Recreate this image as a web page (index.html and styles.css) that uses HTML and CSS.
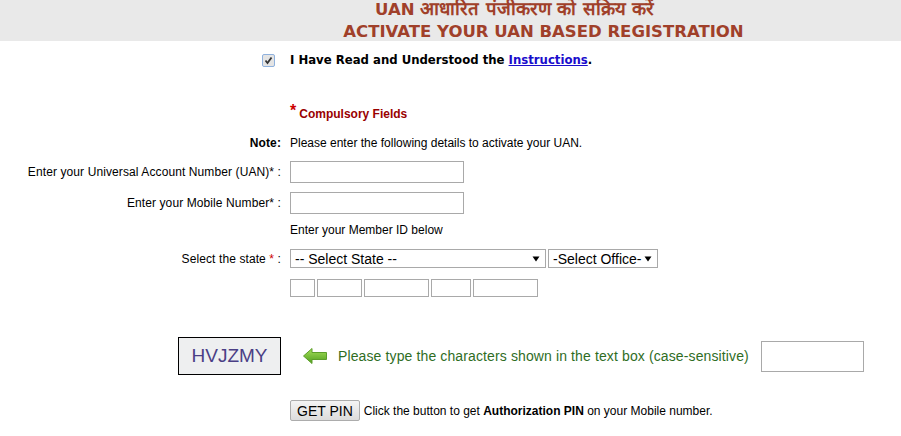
FILE: index.html
```html
<!DOCTYPE html>
<html>
<head>
    <meta charset="UTF-8">
    <title>Activate UAN</title>
    <link rel="stylesheet" href="styles.css">
</head>
<body>
    <div class="header">
        <div class="title-hi">UAN <span class="deva">आधारित पंजीकरण को सक्रिय करें</span></div>
        <div class="title-en">ACTIVATE YOUR UAN BASED REGISTRATION</div>
    </div>

    <div class="form">
        <div class="row row-agree">
            <div class="label"><input type="checkbox" class="agree" checked></div>
            <div class="field agree-text">I Have Read and Understood the&nbsp;<a href="#">Instructions</a>.</div>
        </div>

        <div class="row row-compulsory">
            <div class="label"></div>
            <div class="field compulsory"><span class="star">*</span> Compulsory Fields</div>
        </div>

        <div class="row row-note">
            <div class="label"><b>Note:</b></div>
            <div class="field">Please enter the following details to activate your UAN.</div>
        </div>

        <div class="row row-input">
            <div class="label">Enter your Universal Account Number (UAN)* :</div>
            <div class="field"><input type="text" class="text-box"></div>
        </div>

        <div class="row row-input">
            <div class="label">Enter your Mobile Number* :</div>
            <div class="field"><input type="text" class="text-box"></div>
        </div>

        <div class="row row-member">
            <div class="label"></div>
            <div class="field">Enter your Member ID below</div>
        </div>

        <div class="row row-select">
            <div class="label">Select the state <span class="req">*</span> :</div>
            <div class="field selects">
                <select class="state"><option>-- Select State --</option></select>
                <select class="office"><option>-Select Office-</option></select>
            </div>
        </div>

        <div class="row row-member-id">
            <div class="label"></div>
            <div class="field member-ids">
                <input type="text" class="mid mid-1">
                <input type="text" class="mid mid-2">
                <input type="text" class="mid mid-3">
                <input type="text" class="mid mid-4">
                <input type="text" class="mid mid-3">
            </div>
        </div>

        <div class="row row-captcha">
            <div class="label"><div class="captcha">HVJZMY</div></div>
            <div class="field captcha-field">
                <svg class="arrow" width="24" height="16" viewBox="0 0 24 16">
                    <defs>
                        <linearGradient id="g" x1="0" y1="0" x2="0" y2="1">
                            <stop offset="0" stop-color="#a6e05a"/>
                            <stop offset="1" stop-color="#4f9e1d"/>
                        </linearGradient>
                    </defs>
                    <path d="M0.5 8 L9 0.5 V4.5 H23.5 V11.5 H9 V15.5 Z" fill="url(#g)" stroke="#5c9e2a" stroke-width="1"/>
                </svg>
                <span class="captcha-text">Please type the characters shown in the text box (case-sensitive)</span>
                <input type="text" class="captcha-box">
            </div>
        </div>

        <div class="row row-pin">
            <div class="label"></div>
            <div class="field">
                <button class="pin-btn">GET PIN</button>
                <span class="pin-text">Click the button to get <b>Authorization PIN</b> on your Mobile number.</span>
            </div>
        </div>
    </div>
</body>
</html>
```

FILE: styles.css
```css
body {
    margin: 0;
    font-family: "Liberation Sans", Arial, sans-serif;
    font-size: 12px;
    color: #000;
    background: #fff;
}

.header {
    height: 41px;
    background-color: #e9e9e9;
    overflow: hidden;
    color: #a0402a;
    font-family: "DejaVu Sans", sans-serif;
    font-weight: bold;
}

.title-hi {
    margin-top: -3px;
    padding-left: 128px;
    text-align: center;
    font-size: 16.5px;
    line-height: 24px;
}

.title-hi .deva {
    font-size: 18.5px;
}

.title-en {
    padding-left: 186px;
    text-align: center;
    font-size: 16.5px;
    line-height: 20px;
}

.form {
    display: flex;
    flex-direction: column;
}

.row {
    display: flex;
    align-items: center;
}

.label {
    width: 290px;
    box-sizing: border-box;
    padding-right: 9px;
    text-align: right;
    flex-shrink: 0;
    letter-spacing: 0.1px;
}

.field {
    display: flex;
    align-items: center;
}

.req {
    color: #cc0000;
}

/* row spacing */
.row-agree { margin-top: 9px; height: 19px; }
.row-compulsory { margin-top: 37px; height: 16px; }
.row-note { margin-top: 13px; height: 16px; }
.row-input { margin-top: 10px; height: 22px; }
.row-input + .row-input { margin-top: 9px; }
.row-member { margin-top: 8px; height: 16px; }
.row-select { margin-top: 11px; height: 19px; }
.row-member-id { margin-top: 11px; height: 18px; }
.row-captcha { margin-top: 40px; height: 38px; }
.row-pin { margin-top: 25px; height: 21px; }

.agree {
    -webkit-appearance: none;
    appearance: none;
    display: inline-block;
    vertical-align: middle;
    width: 13px;
    height: 13px;
    margin: 0 6px 0 0;
    border: 1px solid #8fb1dd;
    border-radius: 2px;
    background: #e4e4e4 url("data:image/svg+xml,%3Csvg xmlns='http://www.w3.org/2000/svg' width='11' height='11'%3E%3Cpath d='M2.5 5.5 L4.5 8 L8.5 2.5' fill='none' stroke='%23333' stroke-width='1.8'/%3E%3C/svg%3E") center no-repeat;
    box-sizing: border-box;
}

.agree-text {
    font-family: "DejaVu Sans Condensed", "DejaVu Sans", sans-serif;
    font-stretch: condensed;
    font-weight: bold;
    font-size: 13px;
}

.agree-text a {
    color: #1a0dcc;
}

.compulsory {
    color: #990000;
    font-weight: bold;
    font-size: 12px;
}

.compulsory .star {
    color: #cc0000;
    font-size: 16px;
    margin-right: 3px;
    position: relative;
    top: -3px;
}

.text-box {
    width: 174px;
    height: 22px;
    box-sizing: border-box;
    border: 1px solid #a9a9a9;
    margin: 0;
    padding: 1px 3px;
    font-size: 12px;
}

.selects {
    gap: 2px;
}

.selects select {
    -webkit-appearance: none;
    appearance: none;
    height: 19px;
    box-sizing: border-box;
    margin: 0;
    border: 1px solid #a9a9a9;
    border-radius: 0;
    padding: 0 14px 0 4px;
    font-family: "Liberation Sans", Arial, sans-serif;
    font-size: 14px;
    color: #000;
    background: #fff url("data:image/svg+xml,%3Csvg xmlns='http://www.w3.org/2000/svg' width='8' height='6'%3E%3Cpath d='M0.5 0.5 H7.5 L4 5.5 Z' fill='%23000'/%3E%3C/svg%3E") right 5px center no-repeat;
}

.state {
    width: 256px;
}

.office {
    width: 110px;
}

.member-ids {
    gap: 2px;
}

.mid {
    height: 18px;
    box-sizing: border-box;
    border: 1px solid #a9a9a9;
    margin: 0;
    padding: 0 2px;
}

.mid-1 { width: 25px; }
.mid-2 { width: 45px; }
.mid-3 { width: 65px; }
.mid-4 { width: 40px; }

.captcha {
    display: inline-block;
    vertical-align: middle;
    width: 103px;
    height: 38px;
    box-sizing: border-box;
    border: 1px solid #000;
    background-color: #eeeff0;
    color: #4a3e85;
    font-size: 19px;
    line-height: 36px;
    text-align: center;
    letter-spacing: 0;
}

.arrow {
    margin-left: 13px;
    margin-right: 11px;
}

.captcha-text {
    color: #2f6d1f;
    font-size: 14px;
    letter-spacing: 0.12px;
}

.captcha-box {
    width: 103px;
    height: 31px;
    box-sizing: border-box;
    margin: 0 0 0 12px;
    border: 1px solid #a9a9a9;
}

.pin-btn {
    height: 21px;
    margin: 0;
    padding: 0 6px;
    border: 1px solid #acacac;
    border-radius: 2px;
    background: linear-gradient(#f4f4f4, #dcdcdc);
    font-family: "Liberation Sans", Arial, sans-serif;
    font-size: 14px;
    color: #000;
}

.pin-text {
    margin-left: 4px;
    font-size: 12px;
}
```
